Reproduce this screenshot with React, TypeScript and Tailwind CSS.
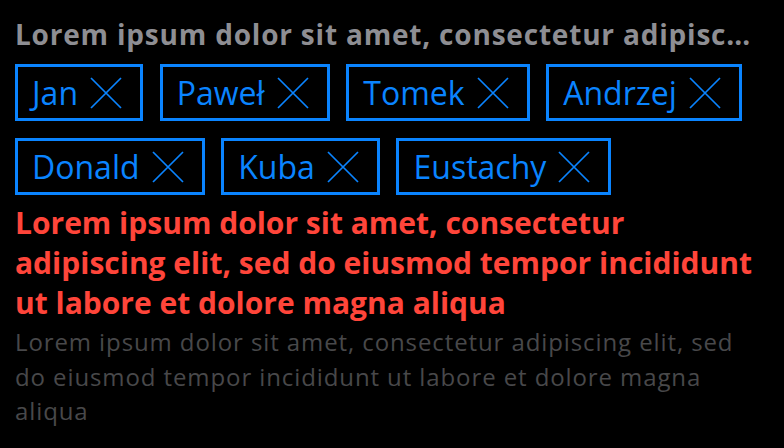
import React from "react";

const names = ["Jan", "Paweł", "Tomek", "Andrzej", "Donald", "Kuba", "Eustachy"];

function XIcon() {
  return (
    <svg width="32" height="32" viewBox="0 0 32 32" className="shrink-0">
      <path d="M1 1 L31 31 M31 1 L1 31" stroke="#0a84ff" strokeWidth="1.7" fill="none" />
    </svg>
  );
}

function Chip({ name }: { name: string }) {
  return (
    <div className="flex items-center border-[3px] border-[#0a84ff] h-[57px] pl-[14px] pr-[18px] gap-[12px]">
      <span className="text-[32px] text-[#0a84ff] leading-[32px]">{name}</span>
      <XIcon />
    </div>
  );
}

export default function App() {
  return (
    <div className="w-[784px] h-[448px] bg-black overflow-hidden pl-[15px] pr-[17px] pt-[16px] font-['Open_Sans',sans-serif]">
      <div className="mr-[8px] text-[28px] font-bold tracking-[0.8px] text-[#8e8e93] leading-[36px] truncate">
        Lorem ipsum dolor sit amet, consectetur adipiscing elit
      </div>
      <div className="flex flex-wrap gap-x-[16.7px] gap-y-[17px] mt-[12px]">
        {names.map((n) => (
          <Chip key={n} name={n} />
        ))}
      </div>
      <div className="mt-[8px] text-[30px] font-bold text-[#ff453a] leading-[40px]">
        Lorem ipsum dolor sit amet, consectetur adipiscing elit, sed do eiusmod tempor incididunt ut labore et dolore magna aliqua
      </div>
      <div className="mt-[2px] text-[24px] tracking-[0.9px] text-[#48484a] leading-[34.5px]">
        Lorem ipsum dolor sit amet, consectetur adipiscing elit, sed do eiusmod tempor incididunt ut labore et dolore magna aliqua
      </div>
    </div>
  );
}
